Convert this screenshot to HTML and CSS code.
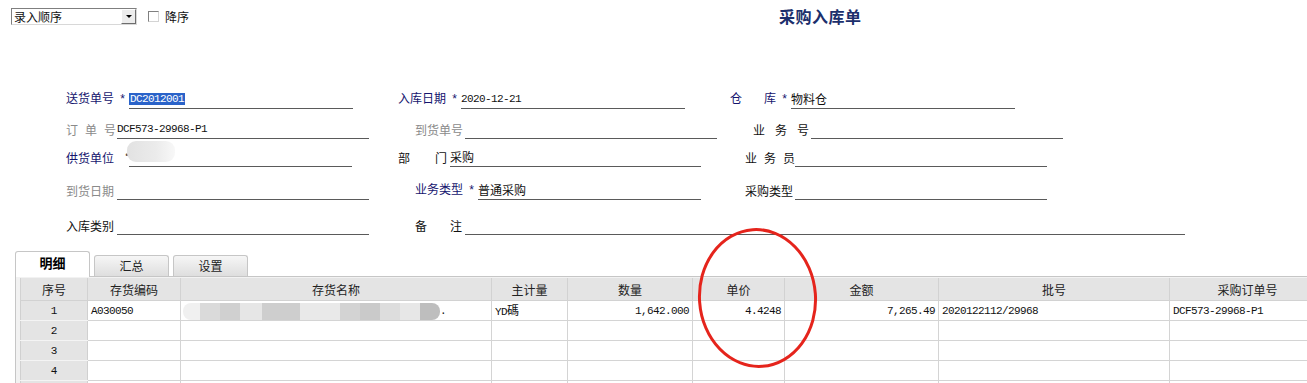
FILE: index.html
```html
<!DOCTYPE html>
<html lang="zh-CN">
<head>
  <meta charset="UTF-8" />
  <title>采购入库单</title>
  <link rel="stylesheet" href="styles.css">
</head>
<body>
  <div class="topbar">
    <div class="sort">
      <div class="select">
        <span class="select-text">录入顺序</span>
        <span class="select-btn"><span class="arrow"></span></span>
      </div>
      <span class="checkbox"></span>
      <span class="check-label">降序</span>
    </div>
    <h1 class="title">采购入库单</h1>
  </div>

  <div class="form">
    <!-- row 1 -->
    <div class="field">
      <span class="label navy w63">送货单号<span class="star">*</span></span>
      <span class="value w224"><span class="selected">DC2012001</span></span>
    </div>
    <div class="field">
      <span class="label navy w63">入库日期<span class="star">*</span></span>
      <span class="value w224 mono">2020-12-21</span>
    </div>
    <div class="field">
      <span class="label navy w61"><span class="cang">仓</span>库<span class="star">*</span></span>
      <span class="value w224">物料仓</span>
    </div>

    <!-- row 2 -->
    <div class="field">
      <span class="label grey w51"><span class="sp7">订单</span>号</span>
      <span class="value w252 mono">DCF573-29968-P1</span>
    </div>
    <div class="field">
      <span class="label grey w67 ind17">到货单号</span>
      <span class="value w252"></span>
    </div>
    <div class="field">
      <span class="label w81 ind23"><span class="sp10">业务</span>号</span>
      <span class="value w252"></span>
    </div>

    <!-- row 3 -->
    <div class="field">
      <span class="label navy w54">供货单位</span>
      <span class="dot">·</span>
      <span class="smudge"></span>
      <span class="value w223 over"></span>
    </div>
    <div class="field">
      <span class="label w52"><span class="sp25">部</span>门</span>
      <span class="value w251">采购</span>
    </div>
    <div class="field">
      <span class="label w65 ind15"><span class="sp7">业务</span>员</span>
      <span class="value w252"></span>
    </div>

    <!-- row 4 -->
    <div class="field">
      <span class="label grey w51">到货日期</span>
      <span class="value w252"></span>
    </div>
    <div class="field">
      <span class="label navy w80 ind17">业务类型<span class="star">*</span></span>
      <span class="value w223">普通采购</span>
    </div>
    <div class="field">
      <span class="label w65 ind15">采购类型</span>
      <span class="value w252"></span>
    </div>

    <!-- row 5 -->
    <div class="field">
      <span class="label w51">入库类别</span>
      <span class="value w252"></span>
    </div>
    <div class="field wide">
      <span class="label w67 ind17"><span class="sp23">备</span>注</span>
      <span class="value w720"></span>
    </div>
  </div>

  <div class="tabs">
    <span class="tab active">明细</span>
    <span class="tab">汇总</span>
    <span class="tab">设置</span>
  </div>

  <div class="panel">
    <table class="grid">
      <colgroup>
        <col class="c-no"><col class="c-code"><col class="c-name"><col class="c-unit">
        <col class="c-qty"><col class="c-price"><col class="c-amt"><col class="c-batch"><col class="c-po">
      </colgroup>
      <thead>
        <tr>
          <th>序号</th><th>存货编码</th><th>存货名称</th><th>主计量</th><th>数量</th>
          <th>单价</th><th>金额</th><th>批号</th><th>采购订单号</th>
        </tr>
      </thead>
      <tbody>
        <tr>
          <td class="no">1</td>
          <td class="mono">A030050</td>
          <td><span class="blur"></span><span class="mono">.</span></td>
          <td><span class="mono">YD</span>碼</td>
          <td class="num">1,642.000</td>
          <td class="num">4.4248</td>
          <td class="num">7,265.49</td>
          <td class="mono">2020122112/29968</td>
          <td class="mono">DCF573-29968-P1</td>
        </tr>
        <tr><td class="no">2</td><td></td><td></td><td></td><td></td><td></td><td></td><td></td><td></td></tr>
        <tr><td class="no">3</td><td></td><td></td><td></td><td></td><td></td><td></td><td></td><td></td></tr>
        <tr><td class="no">4</td><td></td><td></td><td></td><td></td><td></td><td></td><td></td><td></td></tr>
        <tr><td class="no"></td><td></td><td></td><td></td><td></td><td></td><td></td><td></td><td></td></tr>
      </tbody>
    </table>
  </div>

  <div class="mark"></div>
</body>
</html>
```

FILE: styles.css
```css
body {
  margin: 0;
  font-family: "Noto Sans CJK SC", "Noto Sans", sans-serif;
  font-size: 12px;
  color: #111;
  background: #fff;
  overflow: hidden;
  height: 383px;
}
.mono {
  font-family: "Liberation Mono", "Noto Sans CJK SC", monospace;
  font-size: 11px;
  letter-spacing: -0.6px;
}

/* top bar */
.topbar {
  display: grid;
  grid-template-columns: 779px auto;
  height: 30px;
  padding-top: 8px;
  box-sizing: border-box;
}
.sort {
  display: flex;
  align-items: center;
  padding-left: 11px;
  height: 17px;
}
.select {
  display: flex;
  width: 126px;
  height: 17px;
  box-sizing: border-box;
  border: 1px solid #7f7f7f;
  border-right-color: #d8d8d8;
  border-bottom-color: #d8d8d8;
  background: #fff;
}
.select-text {
  flex: 1;
  font-size: 12px;
  line-height: 15px;
  padding-left: 2px;
}
.select-btn {
  width: 15px;
  display: flex;
  align-items: center;
  justify-content: center;
  background: #ececec;
  border: 1px solid #fff;
  border-right-color: #6d6d6d;
  border-bottom-color: #6d6d6d;
  box-sizing: border-box;
}
.arrow {
  border-left: 3px solid transparent;
  border-right: 3px solid transparent;
  border-top: 3px solid #000;
}
.checkbox {
  width: 11px;
  height: 11px;
  box-sizing: border-box;
  margin-left: 11px;
  border: 1px solid #808080;
  border-right-color: #d4d4d4;
  border-bottom-color: #d4d4d4;
  background: #fff;
}
.check-label {
  margin-left: 6px;
  font-size: 12px;
}
.title {
  margin: 0;
  font-size: 16px;
  font-weight: bold;
  color: #1c2f6c;
  line-height: 20px;
  margin-top: -2px;
  letter-spacing: 0.5px;
}

/* header form */
.form {
  display: grid;
  grid-template-columns: 332px 332px 1fr;
  grid-template-rows: 30px 28px 33px 35px 20px;
  padding-left: 66px;
  margin-top: 59px;
}
.field {
  display: flex;
  align-items: flex-end;
  height: 20px;
  position: relative;
}
.field.wide {
  grid-column: 2 / 4;
}
.label {
  flex: none;
  line-height: 16px;
  padding-bottom: 1px;
  white-space: nowrap;
  box-sizing: border-box;
}
.navy { color: #15156e; }
.grey { color: #8a8a8a; }
.star {
  font-family: "Liberation Mono", monospace;
  font-size: 12px;
  margin-left: 5px;
  color: #15156e;
}
.cang { margin-right: 22px; }
.sp7 { letter-spacing: 7px; }
.sp10 { letter-spacing: 10px; }
.sp23 { letter-spacing: 23px; }
.sp25 { letter-spacing: 25px; }
.ind15 { padding-left: 15px; }
.ind17 { padding-left: 17px; }
.ind23 { padding-left: 23px; }
.w51 { width: 51px; }
.w52 { width: 52px; }
.w54 { width: 54px; }
.w61 { width: 61px; }
.w63 { width: 63px; }
.w65 { width: 65px; }
.w67 { width: 67px; }
.w80 { width: 80px; }
.w81 { width: 81px; }
.value {
  flex: none;
  height: 19px;
  line-height: 16px;
  border-bottom: 1px solid #5a5a5a;
  white-space: nowrap;
  display: flex;
  align-items: flex-end;
  padding-bottom: 1px;
  box-sizing: content-box;
}
.w223 { width: 223px; }
.w224 { width: 224px; }
.w251 { width: 251px; }
.w252 { width: 252px; }
.w720 { width: 720px; }
.selected {
  font-family: "Liberation Mono", monospace;
  font-size: 11px;
  letter-spacing: -0.6px;
  line-height: 12px;
  background: #2a63c9;
  color: #fff;
  padding: 0 1px;
  margin-bottom: 2px;
}
.dot {
  position: absolute;
  left: 55px;
  bottom: 4px;
  color: #555;
}
.smudge {
  position: absolute;
  left: 61px;
  top: -6px;
  width: 48px;
  height: 21px;
  border-radius: 9px;
  background: linear-gradient(to right, #e2e2e2, #ebebeb 60%, #f8f8f8);
}
.value.over {
  margin-left: 9px;
}

/* tabs */
.tabs {
  display: flex;
  align-items: flex-end;
  gap: 4px;
  padding-left: 15px;
  margin-top: 16px;
  height: 25px;
}
.tab {
  width: 75px;
  height: 21px;
  box-sizing: border-box;
  border: 1px solid #c6c6c6;
  border-bottom: none;
  border-radius: 3px 3px 0 0;
  background: linear-gradient(#f6f6f6, #dedede);
  text-align: center;
  line-height: 20px;
  font-size: 12px;
  color: #222;
}
.tab.active {
  height: 26px;
  margin-bottom: -1px;
  background: #fff;
  font-weight: bold;
  font-size: 13px;
  line-height: 22px;
  color: #000;
}

/* detail grid */
.panel {
  margin-left: 15px;
  border-left: 1px solid #c6c6c6;
  border-top: 1px solid #c6c6c6;
  background: #f2f2f2;
  padding: 1px 0 0 4px;
  overflow: hidden;
}
.grid {
  border-collapse: collapse;
  table-layout: fixed;
  width: 1305px;
  background: #fff;
}
.c-no { width: 67px; }
.c-code { width: 93px; }
.c-name { width: 311px; }
.c-unit { width: 76px; }
.c-qty { width: 125px; }
.c-price { width: 92px; }
.c-amt { width: 154px; }
.c-batch { width: 231px; }
.c-po { width: 156px; }
.grid th {
  height: 22px;
  padding: 0;
  font-weight: normal;
  font-size: 12px;
  color: #222;
  background: #e4e4e4;
  border: 1px solid #d2d2d2;
  border-top: none;
  text-align: center;
}
.grid td {
  height: 19px;
  padding: 0 3px;
  border: 1px solid #d4d4d4;
  white-space: nowrap;
  overflow: hidden;
  line-height: 16px;
}
.grid td.no {
  background: #e4e4e4;
  text-align: center;
  font-family: "Liberation Mono", monospace;
  font-size: 11px;
  border-color: #d0d0d0 #d0d0d0 #f4f4f4;
}
.grid td.num {
  text-align: right;
  font-family: "Liberation Mono", monospace;
  font-size: 11px;
  letter-spacing: -0.6px;
}
.blur {
  display: inline-block;
  vertical-align: middle;
  margin-left: -1px;
  width: 257px;
  height: 17px;
  border-radius: 8px;
  background: linear-gradient(to right,
    #f0f0f0 0, #f0f0f0 17px,
    #dadada 17px, #dadada 37px,
    #d0d0d0 37px, #d0d0d0 57px,
    #e6e6e6 57px, #e6e6e6 79px,
    #cecece 79px, #cecece 117px,
    #e9e9e9 117px, #e9e9e9 157px,
    #d3d3d3 157px, #d3d3d3 177px,
    #cacaca 177px, #cacaca 197px,
    #dddddd 197px, #dddddd 217px,
    #e7e7e7 217px, #e7e7e7 237px,
    #bebebe 237px, #bebebe 257px);
}

/* annotation drawn over the screenshot */
.mark {
  position: absolute;
  left: 698px;
  top: 228px;
  width: 119px;
  height: 140px;
  box-sizing: border-box;
  border: 3px solid #e5241c;
  border-radius: 50%;
  transform: rotate(-4deg);
}
```
